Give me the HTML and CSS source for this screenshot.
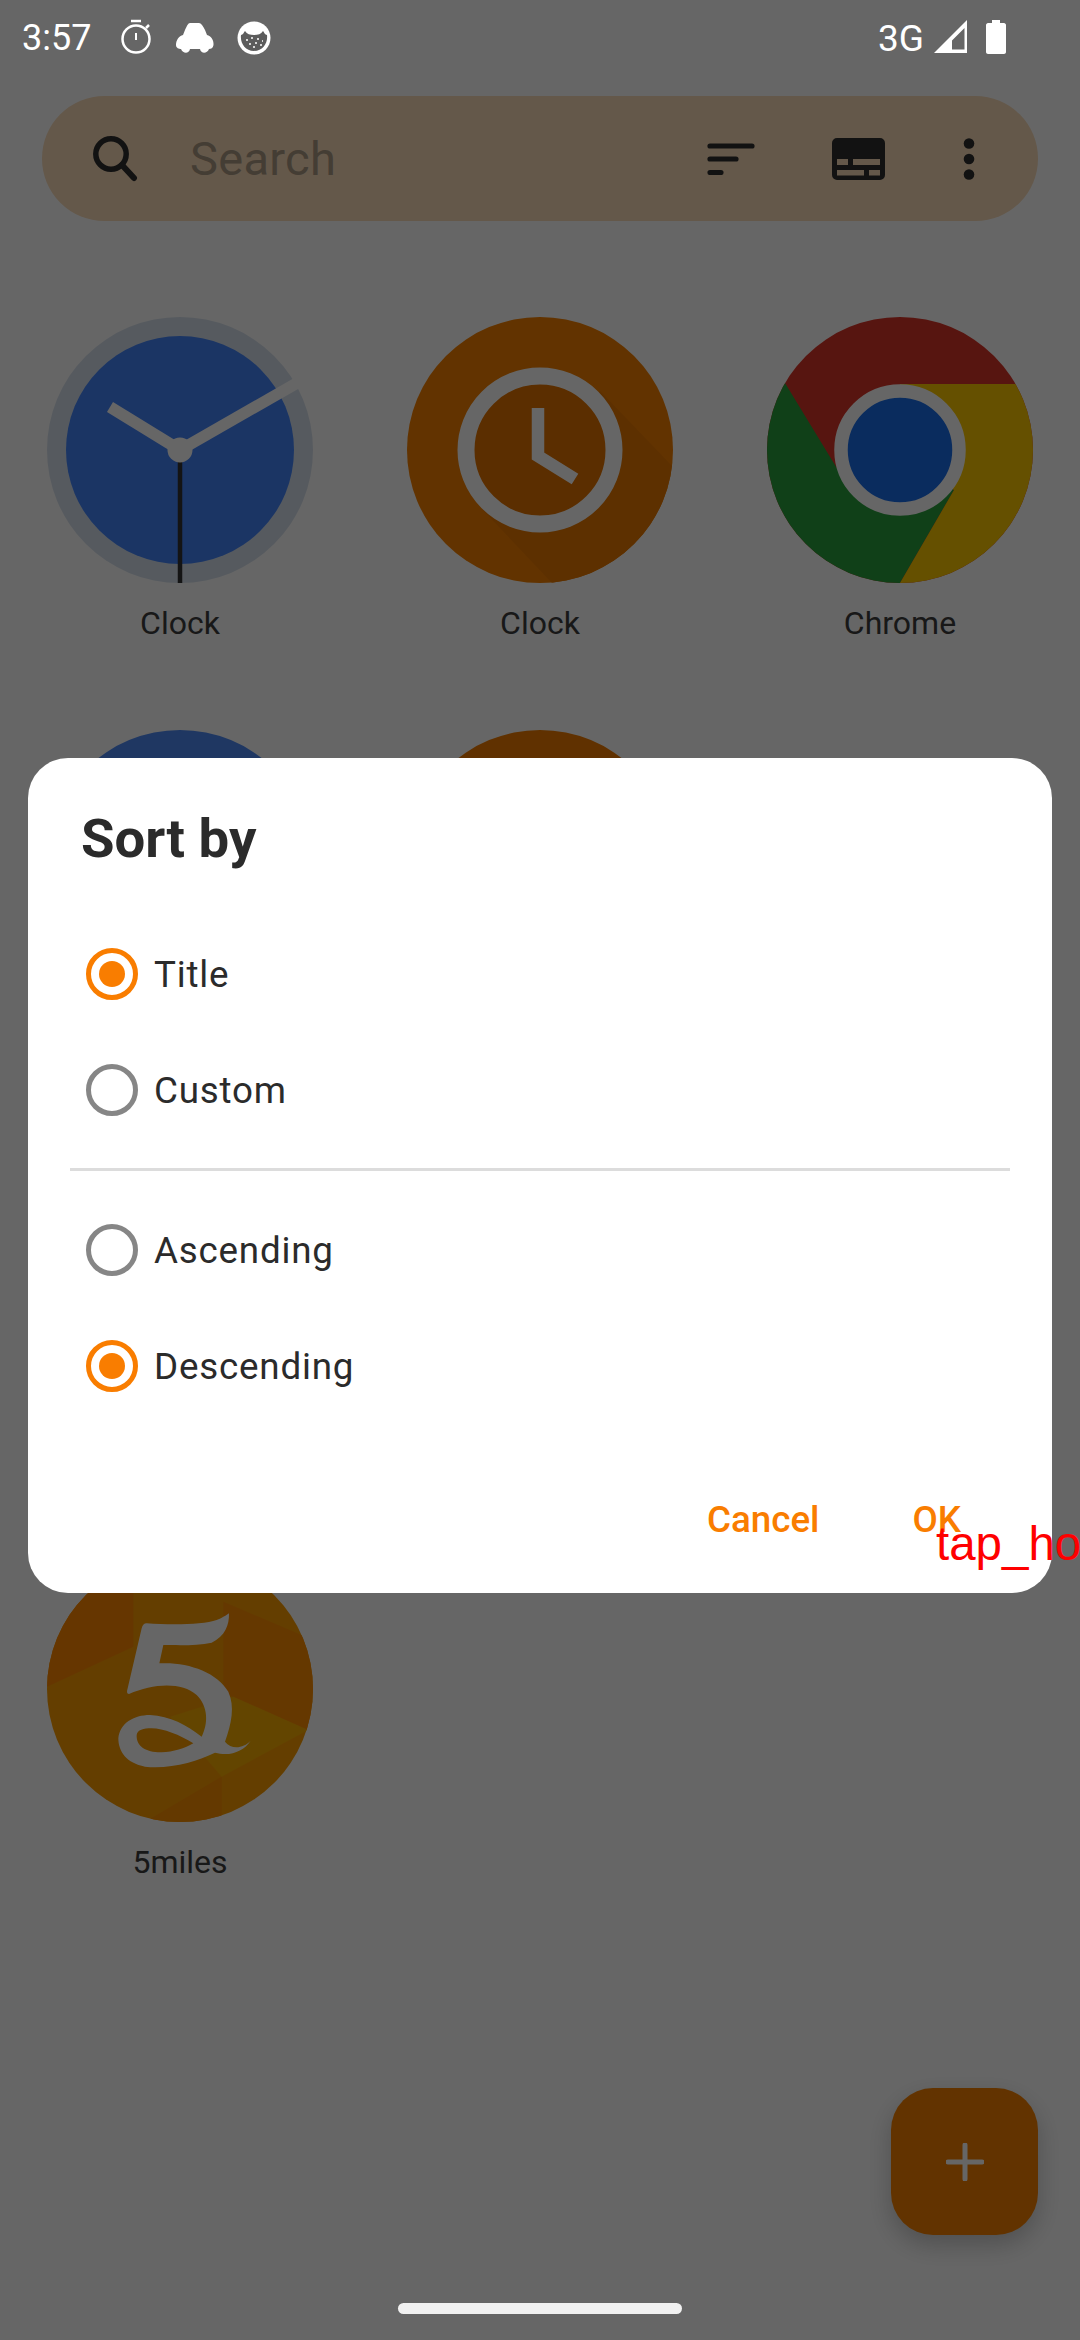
FILE: index.html
```html
<!DOCTYPE html>
<html lang="en">
<head>
<meta charset="utf-8">
<title>Sort by</title>
<link rel="stylesheet" href="styles.css">
</head>
<body>
<div class="app">
  <main class="launcher">
    <div class="status-space"></div>
    <div class="search">
      <svg class="ic-search" viewBox="0 0 46 48"><circle cx="19" cy="19" r="15.2" fill="none" stroke="#2f2f2f" stroke-width="5.500"/><path d="M30 30 L42 43" stroke="#2f2f2f" stroke-width="6" stroke-linecap="round"/></svg>
      <span class="search-text">Search</span>
      <svg class="ic-sort" viewBox="0 0 48 32"><path d="M3 3H45M3 16H29M3 29.500H14" fill="none" stroke="#2f2f2f" stroke-width="5.200" stroke-linecap="round"/></svg>
      <svg class="ic-caption" viewBox="0 0 53 42"><path fill="#2f2f2f" fill-rule="evenodd" d="M5 0H48A5 5 0 0 1 53 5V37A5 5 0 0 1 48 42H5A5 5 0 0 1 0 37V5A5 5 0 0 1 5 0ZM5 21V27H16V21ZM21 21V27H48V21ZM5 32V37.500H32V32ZM37 32V37.500H48V32Z"/></svg>
      <svg class="ic-more" viewBox="0 0 12 42"><circle cx="6" cy="5.500" r="5.300" fill="#2f2f2f"/><circle cx="6" cy="21" r="5.300" fill="#2f2f2f"/><circle cx="6" cy="36.500" r="5.300" fill="#2f2f2f"/></svg>
    </div>
    <div class="apps">
      <div class="app-cell">
        <svg class="app-icon" viewBox="0 0 266 266"><circle cx="133" cy="133" r="133" fill="#d8e2ee"/><circle cx="133" cy="133" r="114" fill="#4485fb"/><path d="M133 133L63 90" stroke="#fff" stroke-width="11.500" fill="none"/><path d="M133 133L250 66" stroke="#fff" stroke-width="11.500" fill="none"/><path d="M133 133V266" stroke="#333" stroke-width="4.500" fill="none"/><circle cx="133" cy="133" r="12.500" fill="#fff"/></svg>
        <span class="app-label">Clock</span>
      </div>
      <div class="app-cell">
        <svg class="app-icon" viewBox="0 0 266 266"><defs><clipPath id="cc"><circle cx="133" cy="133" r="133"/></clipPath></defs><circle cx="133" cy="133" r="133" fill="#f58000"/><path clip-path="url(#cc)" d="M75 192L145 266H266V150L193 74Z" fill="#e87800"/><circle cx="133" cy="133" r="74" fill="#e47400" stroke="#fff" stroke-width="17"/><path d="M131 91V139L168 162" fill="none" stroke="#fff" stroke-width="12.500"/></svg>
        <span class="app-label">Clock</span>
      </div>
      <div class="app-cell">
        <svg class="app-icon" viewBox="0 0 266 266"><defs><clipPath id="cr"><circle cx="133" cy="133" r="133"/></clipPath></defs><g clip-path="url(#cr)"><rect width="266" height="266" fill="#da3528"/><polygon points="18,66 71,153 133,133 187,173 133,266 0,266 0,66" fill="#28a03c"/><polygon points="133,67 266,67 266,266 133,266 187,173 133,133" fill="#fcc800"/></g><circle cx="133" cy="133" r="59" fill="#196eeb" stroke="#fff" stroke-width="13.500"/></svg>
        <span class="app-label">Chrome</span>
      </div>
      <div class="app-cell">
        <svg class="app-icon" viewBox="0 0 266 266"><circle cx="133" cy="133" r="133" fill="#4f8bf5"/></svg>
      </div>
      <div class="app-cell">
        <svg class="app-icon" viewBox="0 0 266 266"><circle cx="133" cy="133" r="133" fill="#ef7c00"/></svg>
      </div>
      <div class="app-cell"></div>
      <div class="app-cell"></div>
      <div class="app-cell"></div>
      <div class="app-cell"></div>
      <div class="app-cell">
        <svg class="app-icon" viewBox="51 -12 798 798"><defs><clipPath id="cf"><circle cx="450" cy="387" r="399"/></clipPath></defs><g clip-path="url(#cf)"><rect x="51" y="-12" width="798" height="798" fill="#fa9b00"/><polygon points="51,-12 310,-12 310,260 51,380" fill="#fe8800"/><polygon points="580,125 849,240 849,520 610,410 580,400" fill="#fd8c00"/><polygon points="610,410 835,510 575,650 420,470" fill="#f8ac00"/><polygon points="345,786 575,650 575,786" fill="#fb8e00"/></g><path fill="#fff" fill-rule="evenodd" d="M350 190C420 195 520 195 560 180C575 175 590 165 597 160C598 195 585 230 545 248C500 258 440 255 400 255L388 310C470 305 560 335 595 395C615 440 605 490 585 545C605 570 640 565 662 542C640 575 600 590 555 578C500 605 420 628 345 620C290 610 265 575 265 535C270 490 310 465 360 465C420 468 470 495 515 530C535 490 535 440 500 405C455 365 370 370 297 402C290 402 290 395 293 385L335 205C338 195 342 190 350 190ZM320 525C318 560 350 578 395 577C430 576 465 565 490 550C450 525 400 505 365 505C340 505 322 510 320 525Z"/></svg>
        <span class="app-label">5miles</span>
      </div>
    </div>
    <div class="fab">
      <svg class="ic-plus" viewBox="0 0 38 38"><path d="M19 2V36M2 19H36" stroke="#fff" stroke-width="5" stroke-linecap="round"/></svg>
    </div>
  </main>

  <div class="scrim"></div>

  <header class="status">
    <span class="clock">3:57</span>
    <svg class="st-watch" viewBox="0 0 32 36"><path d="M10 2H20" stroke="#fff" stroke-width="2.500"/><circle cx="15" cy="20" r="13.500" fill="none" stroke="#fff" stroke-width="2.500"/><path d="M15 14V21" stroke="#fff" stroke-width="2"/><path d="M25 9L28 6" stroke="#fff" stroke-width="2.500"/></svg>
    <svg class="st-car" viewBox="0 0 38 31"><path fill="#fff" d="M14 0H23C25 0 27 3 29 7L31 12C35 13 38 17 37.500 22C37 25 35 26 33 26C31 31 25 31 24 26H14C13 31 7 31 5 26C3 26 0 25 0 22C0 17 3 13 7 12L9 7C11 3 12 0 14 0Z"/></svg>
    <svg class="st-globe" viewBox="0 0 34 34"><circle cx="17" cy="17" r="16.500" fill="#fff"/><path fill="#5c5c5c" d="M4 14C6 14 7 11 8 10C10 13 13 14 17 14C21 14 24 13 26 10C27 11 28 14 30 14C31 22 26 30 17 30C8 30 3 22 4 14Z"/><path d="M9 19h2M14 17h2M20 18h2M25 20h1M12 23h2M18 22h2M23 24h2M16 26h2" stroke="#fff" stroke-width="1.600"/></svg>
    <span class="status-gap"></span>
    <span class="net">3G</span>
    <svg class="st-signal" viewBox="0 0 33 33"><path fill="#fff" d="M33 0V33H0ZM30.500 8L18 20.500V29.500H30.500Z" fill-rule="evenodd"/></svg>
    <svg class="st-battery" viewBox="0 0 20 34"><path fill="#fff" d="M6 0H14V3H18C19 3 20 4 20 5V32C20 33 19 34 18 34H2C1 34 0 33 0 32V5C0 4 1 3 2 3H6Z"/></svg>
  </header>

  <section class="dialog">
    <h1 class="dialog-title">Sort by</h1>
    <div class="option"><span class="radio on"><span class="dot"></span></span><span class="option-text">Title</span></div>
    <div class="option"><span class="radio"></span><span class="option-text">Custom</span></div>
    <div class="divider"></div>
    <div class="option"><span class="radio"></span><span class="option-text">Ascending</span></div>
    <div class="option"><span class="radio on"><span class="dot"></span></span><span class="option-text">Descending</span></div>
    <div class="actions"><span class="action">Cancel</span><span class="action">OK</span></div>
  </section>

  <div class="nav-pill"></div>
  <div class="debug-tag">tap_ho</div>
</div>
</body>
</html>
```
FILE: styles.css
```css
* { box-sizing: border-box; }
html, body { margin: 0; padding: 0; }
body { width: 1080px; height: 2340px; overflow: hidden; font-family: Roboto, sans-serif; }
.app { position: relative; width: 1080px; height: 2340px; overflow: hidden; background: #fff; }

.launcher { display: flex; flex-direction: column; height: 100%; padding: 0 42px; }
.status-space { height: 96px; flex: none; }
.search { display: flex; align-items: center; height: 125px; flex: none; border-radius: 62.500px / 62.500px; background: #fadcb9; }
.ic-search { width: 46px; height: 48px; margin-left: 50px; flex: none; }
.search-text { margin-left: 52px; font-size: 47px; letter-spacing: .3px; color: #aa9882; flex: 1; }
.ic-sort { width: 48px; height: 32px; margin-right: 77px; flex: none; }
.ic-caption { width: 53px; height: 42px; margin-right: 78px; flex: none; }
.ic-more { width: 12px; height: 42px; margin-right: 63px; flex: none; }

.apps { display: grid; grid-template-columns: repeat(3, 266px); column-gap: 94px; grid-auto-rows: 413px; margin: 96px 0 0 5px; }
.app-cell { display: flex; flex-direction: column; align-items: center; }
.app-icon { width: 266px; height: 266px; display: block; flex: none; }
.app-label { margin-top: 22px; font-size: 32px; line-height: 37px; color: #3e3e3e; }

.fab { position: absolute; left: 891px; top: 2088px; width: 147px; height: 147px; border-radius: 42px; background: #f58000; display: flex; align-items: center; justify-content: center; box-shadow: 0 10px 24px rgba(0,0,0,.22); }
.ic-plus { width: 38px; height: 38px; }

.scrim { position: absolute; inset: 0; background: rgba(0,0,0,.6); }

.status { position: absolute; left: 0; top: 0; width: 1080px; height: 72px; display: flex; align-items: center; padding: 4px 0 0 22px; color: #fff; }
.clock { font-size: 36px; width: 68px; white-space: nowrap; }
.st-watch { width: 32px; height: 36px; margin: -2px 0 0 31px; flex: none; }
.st-car { width: 38px; height: 31px; margin-left: 23px; flex: none; }
.st-globe { width: 34px; height: 34px; margin-left: 23px; flex: none; }
.status-gap { flex: 1; }
.net { font-size: 37px; width: 45px; white-space: nowrap; }
.st-signal { width: 33px; height: 33px; margin-left: 11px; flex: none; margin-top: -4px; }
.st-battery { width: 20px; height: 34px; margin: -3px 74px 0 19px; flex: none; }

.dialog { position: absolute; left: 28px; top: 758px; width: 1024px; height: 835px; background: #fff; border-radius: 40px; }
.dialog-title { margin: 0; height: 158px; padding: 50px 0 0 53px; font-size: 54.500px; line-height: 60px; font-weight: 700; color: #2b2b2b; }
.option { display: flex; align-items: center; gap: 16px; height: 116px; padding-left: 58px; }
.radio { display: flex; align-items: center; justify-content: center; width: 52px; height: 52px; border: 5.250px solid #868686; border-radius: 50%; flex: none; }
.radio.on { border-color: #f97d00; }
.dot { width: 26px; height: 26px; border-radius: 50%; background: #f97d00; }
.option-text { font-size: 36.750px; letter-spacing: .8px; color: #2b2b2b; padding-top: 1px; }
.divider { height: 2.500px; margin: 20px 42px 21px 42px; background: #dcdcdc; }
.actions { display: flex; justify-content: flex-end; gap: 93px; padding: 74px 91px 0 0; }
.action { font-size: 36.750px; font-weight: 500; color: #f97d00; line-height: 44px; }

.nav-pill { position: absolute; left: 398px; top: 2303px; width: 284px; height: 11px; border-radius: 6px; background: #f1f1f1; }
.debug-tag { position: absolute; left: 936px; top: 1516px; font-family: "Liberation Sans", sans-serif; font-size: 47.500px; line-height: 56px; color: #f00; white-space: nowrap; }
```
